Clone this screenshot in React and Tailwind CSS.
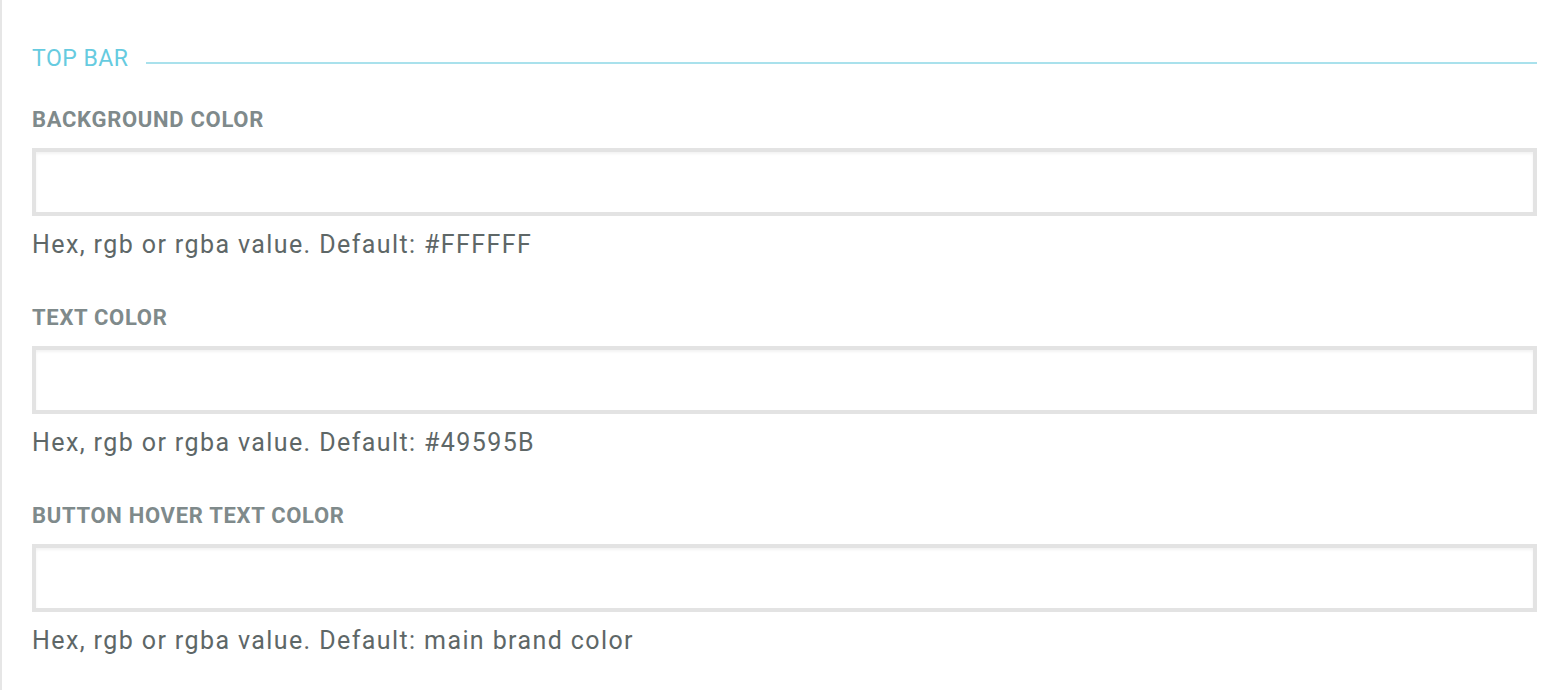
export default function App() {
  const fields = [
    { label: "BACKGROUND COLOR", hint: "Hex, rgb or rgba value. Default: #FFFFFF" },
    { label: "TEXT COLOR", hint: "Hex, rgb or rgba value. Default: #49595B" },
    { label: "BUTTON HOVER TEXT COLOR", hint: "Hex, rgb or rgba value. Default: main brand color" },
  ];
  return (
    <div
      className="w-[1566px] h-[690px] bg-white border-l-2 border-[#e6e6e6] pl-[30px] pr-[29px] pt-[46px] overflow-hidden"
      style={{ fontFamily: "Roboto, 'Liberation Sans', sans-serif" }}
    >
      <div className="flex items-center">
        <span className="text-[23px] leading-[26px] text-[#66cbe0] tracking-[0.5px]">TOP BAR</span>
        <div className="flex-1 ml-[18px] mt-[7px] h-[2px] bg-[#a9e1ec]" />
      </div>
      <div className="mt-[35px] flex flex-col gap-[46px]">
        {fields.map((f) => (
          <div key={f.label} className="flex flex-col">
            <div className="text-[22px] leading-[26px] font-bold text-[#7f8a8b] tracking-[0.7px]">{f.label}</div>
            <div className="mt-[15px] h-[68px] border-4 border-[#e3e3e3] bg-white shadow-[inset_0_2px_3px_rgba(0,0,0,0.05)]" />
            <div className="mt-[15px] text-[25px] leading-[28px] text-[#5e6767] tracking-[1.4px]">{f.hint}</div>
          </div>
        ))}
      </div>
    </div>
  );
}
